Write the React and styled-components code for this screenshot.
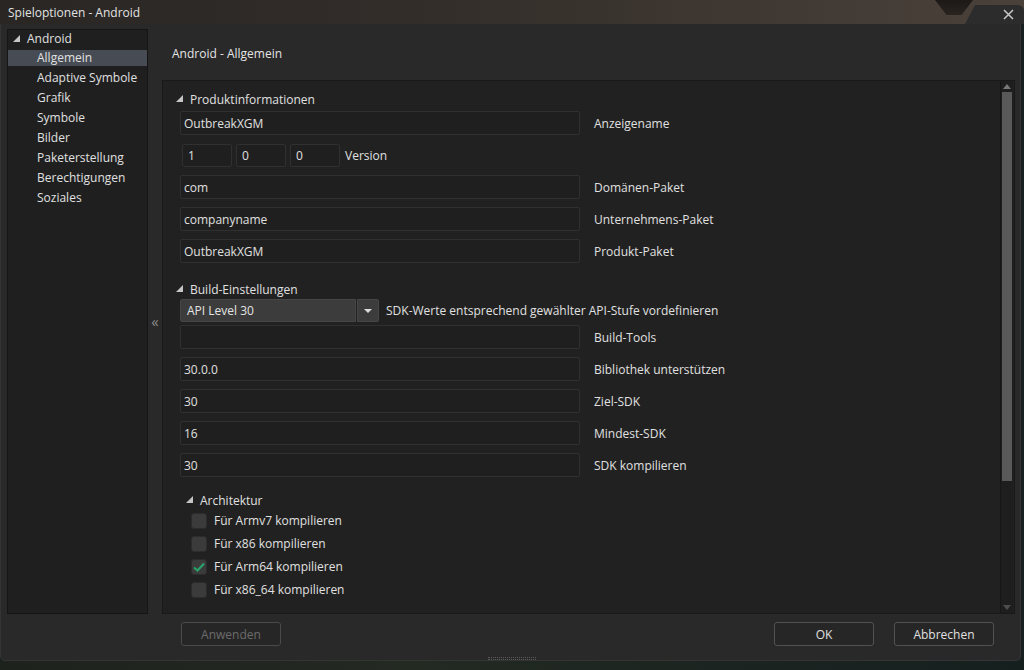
import React from 'react'
import styled, { createGlobalStyle } from 'styled-components'

const Global = createGlobalStyle`
  html, body { margin: 0; padding: 0; background: #17201e; }
  * { box-sizing: border-box; }
  body { font-family: "Open Sans", "Noto Sans", sans-serif; font-size: 12px; color: #dcdcdc; }
`

const Window = styled.div`
  width: 1024px;
  height: 670px;
  display: flex;
  flex-direction: column;
  background: #17201e;
  overflow: hidden;
`

const TitleBar = styled.div`
  height: 24px;
  flex: none;
  position: relative;
  display: flex;
  align-items: center;
  padding-left: 8px;
  font-size: 12px;
  color: #e2e2e2;
  background: linear-gradient(to right, #292624 0%, #322d29 40%, #4a413a 100%);
`

const Notch = styled.div`
  position: absolute;
  top: 0;
  left: 935px;
  width: 38px;
  height: 15px;
  background: linear-gradient(#1c1917, #2a2420);
  clip-path: polygon(0 0, 100% 0, 70% 100%, 30% 100%);
`

const CloseTab = styled.div`
  position: absolute;
  right: 0;
  top: 5px;
  width: 59px;
  height: 19px;
  background: #2c2c2c;
  clip-path: polygon(10px 0, 100% 0, 100% 100%, 0 100%);
  border-top-right-radius: 6px;
  display: flex;
  align-items: center;
  justify-content: flex-end;
  padding-right: 10px;
`

const Body = styled.div`
  height: 637px;
  flex: none;
  display: flex;
  flex-direction: column;
  background: #292929;
  border: 1px solid #343434;
  border-top: none;
  border-radius: 0 0 5px 5px;
  margin-right: 3px;
  padding: 5px 0 0 6px;
`

const BottomStrip = styled.div`
  flex: 1;
  display: flex;
  justify-content: center;
  background: linear-gradient(to right, #1e221d, #232a22 40%, #1c2421 70%, #15201e);
`

const Grip = styled.div`
  width: 48px;
  height: 3px;
  margin-top: -4px;
  border-top: 1px dotted #5a5a5a;
  border-bottom: 1px dotted #5a5a5a;
`

const Main = styled.div`
  display: flex;
  height: 585px;
`

const Tree = styled.div`
  width: 141px;
  background: #1f1f1f;
  border: 1px solid #151515;
`

const TreeItem = styled.div`
  height: ${p => (p.$root ? 17 : 20)}px;
  display: flex;
  align-items: center;
  padding-left: ${p => (p.$root ? 5 : 29)}px;
  gap: 7px;
  background: ${p =>
    p.$active
      ? 'linear-gradient(transparent 3px, #474c54 3px, #474c54 19px, transparent 19px)'
      : 'transparent'};
  color: #e0e0e0;
  font-size: 12px;
`

const Tri = styled.span`
  width: 0;
  height: 0;
  border-left: 7px solid transparent;
  border-bottom: 7px solid #c6c6c6;
  display: inline-block;
  margin-top: -1px;
`

const Collapse = styled.div`
  width: 14px;
  display: flex;
  align-items: center;
  justify-content: center;
  color: #8a8a8a;
  font-size: 15px;
  padding-bottom: 2px;
`

const Right = styled.div`
  width: 853px;
  display: flex;
  flex-direction: column;
`

const Header = styled.div`
  height: 51px;
  padding: 16px 0 0 10px;
  font-size: 12px;
  color: #e4e4e4;
`

const Panel = styled.div`
  flex: 1;
  display: flex;
  background: #212121;
  border: 1px solid #191919;
  overflow: hidden;
`

const Content = styled.div`
  flex: 1;
  padding: 9px 0 0 17px;
`

const Section = styled.div`
  display: flex;
  align-items: center;
  gap: 7px;
  height: 18px;
  margin-left: ${p => p.$indent ?? -4}px;
  color: #e0e0e0;
`

const Row = styled.div`
  display: flex;
  align-items: center;
  height: ${p => p.$h || 24}px;
  margin-top: ${p => p.$mt ?? 8}px;
`

const Input = styled.div`
  width: 400px;
  height: 24px;
  background: #1f1f1f;
  border: 1px solid #303030;
  border-radius: 2px;
  padding-left: 3px;
  display: flex;
  align-items: center;
  color: #e0e0e0;
`

const SmallInput = styled(Input)`
  width: 50px;
  height: 23px;
  margin-right: 4px;
  padding-left: 5px;
`

const Label = styled.span`
  margin-left: ${p => p.$ml ?? 14}px;
  color: #e0e0e0;
  white-space: nowrap;
`

const Select = styled.div`
  display: flex;
  height: 23px;
`

const SelectValue = styled.div`
  width: 176px;
  background: #3c3c3c;
  border: 1px solid #464646;
  border-radius: 2px 0 0 2px;
  padding-left: 6px;
  display: flex;
  align-items: center;
  color: #e4e4e4;
`

const SelectArrow = styled.div`
  width: 22px;
  margin-left: 1px;
  background: #3c3c3c;
  border: 1px solid #464646;
  border-radius: 0 2px 2px 0;
  display: flex;
  align-items: center;
  justify-content: center;
  &::after {
    content: '';
    border-left: 4px solid transparent;
    border-right: 4px solid transparent;
    border-top: 4px solid #dcdcdc;
  }
`

const CheckRow = styled.div`
  display: flex;
  align-items: center;
  gap: 7px;
  height: 23px;
  padding-left: 11px;
  color: #e0e0e0;
`

const Box = styled.span`
  width: 16px;
  height: 16px;
  background: #3b3b3b;
  border: 1px solid #2c2c2c;
  border-radius: 3px;
  display: flex;
  align-items: center;
  justify-content: center;
`

const Scrollbar = styled.div`
  width: 13px;
  display: flex;
  flex-direction: column;
  align-items: center;
  background: #1e1e1e;
  border-left: 1px solid #161616;
  margin-right: 1px;
`

const ScrollArrow = styled.div`
  height: 11px;
  display: flex;
  align-items: center;
  &::after {
    content: '';
    border-left: 4px solid transparent;
    border-right: 4px solid transparent;
    ${p => (p.$down ? 'border-top: 5px solid #4e4e4e;' : 'border-bottom: 5px solid #777;')}
  }
`

const Thumb = styled.div`
  width: 10px;
  height: 389px;
  background: #595959;
`

const Footer = styled.div`
  flex: 1;
  display: flex;
  align-items: flex-start;
  padding: 8px 0 0 174px;
`

const Button = styled.div`
  width: 100px;
  height: 24px;
  border: 1px solid ${p => (p.$disabled ? '#4a4a4a' : '#525252')};
  border-radius: 3px;
  background: #262626;
  display: flex;
  align-items: center;
  justify-content: center;
  color: ${p => (p.$disabled ? '#6c6c6c' : '#e0e0e0')};
  margin-left: ${p => p.$ml || 0}px;
`

const Check = () => (
  <svg width="12" height="10" viewBox="0 0 12 10">
    <path d="M1 5.5 L4.5 8.5 L11 1.5" stroke="#27a36a" strokeWidth="2.2" fill="none" />
  </svg>
)

const Close = () => (
  <svg width="11" height="11" viewBox="0 0 11 11">
    <path d="M1 1 L10 10 M10 1 L1 10" stroke="#c8c8c8" strokeWidth="1.5" />
  </svg>
)

const fields = [
  ['com', 'Domänen-Paket'],
  ['companyname', 'Unternehmens-Paket'],
  ['OutbreakXGM', 'Produkt-Paket'],
]

const build = [
  ['', 'Build-Tools'],
  ['30.0.0', 'Bibliothek unterstützen'],
  ['30', 'Ziel-SDK'],
  ['16', 'Mindest-SDK'],
  ['30', 'SDK kompilieren'],
]

const archs = [
  ['Für Armv7 kompilieren', false],
  ['Für x86 kompilieren', false],
  ['Für Arm64 kompilieren', true],
  ['Für x86_64 kompilieren', false],
]

const treeItems = ['Allgemein', 'Adaptive Symbole', 'Grafik', 'Symbole', 'Bilder', 'Paketerstellung', 'Berechtigungen', 'Soziales']

export default function App() {
  return (
    <Window>
      <Global />
      <TitleBar>
        Spieloptionen - Android
        <Notch />
        <CloseTab><Close /></CloseTab>
      </TitleBar>
      <Body>
        <Main>
          <Tree>
            <TreeItem $root><Tri />Android</TreeItem>
            {treeItems.map((t, i) => (
              <TreeItem key={t} $active={i === 0}>{t}</TreeItem>
            ))}
          </Tree>
          <Collapse>«</Collapse>
          <Right>
            <Header>Android - Allgemein</Header>
            <Panel>
              <Content>
                <Section><Tri />Produktinformationen</Section>
                <Row $mt={3}>
                  <Input>OutbreakXGM</Input>
                  <Label>Anzeigename</Label>
                </Row>
                <Row>
                  <span style={{ width: 2 }} />
                  <SmallInput>1</SmallInput>
                  <SmallInput>0</SmallInput>
                  <SmallInput>0</SmallInput>
                  <Label $ml={1}>Version</Label>
                </Row>
                {fields.map(([v, l]) => (
                  <Row key={l}>
                    <Input>{v}</Input>
                    <Label>{l}</Label>
                  </Row>
                ))}
                <Row $mt={17} $h={18}>
                  <Section><Tri />Build-Einstellungen</Section>
                </Row>
                <Row $mt={1} $h={23}>
                  <Select>
                    <SelectValue>API Level 30</SelectValue>
                    <SelectArrow />
                  </Select>
                  <Label $ml={7}>SDK-Werte entsprechend gewählter API-Stufe vordefinieren</Label>
                </Row>
                {build.map(([v, l], i) => (
                  <Row key={l} $mt={i === 0 ? 3 : 8}>
                    <Input>{v}</Input>
                    <Label>{l}</Label>
                  </Row>
                ))}
                <Row $mt={14} $h={18}>
                  <Section $indent={6}><Tri />Architektur</Section>
                </Row>
                {archs.map(([l, c]) => (
                  <CheckRow key={l}>
                    <Box>{c && <Check />}</Box>
                    {l}
                  </CheckRow>
                ))}
              </Content>
              <Scrollbar>
                <ScrollArrow />
                <Thumb />
                <div style={{ flex: 1 }} />
                <ScrollArrow $down />
              </Scrollbar>
            </Panel>
          </Right>
        </Main>
        <Footer>
          <Button $disabled>Anwenden</Button>
          <Button $ml={493}>OK</Button>
          <Button $ml={20}>Abbrechen</Button>
        </Footer>
      </Body>
      <BottomStrip><Grip /></BottomStrip>
    </Window>
  )
}
